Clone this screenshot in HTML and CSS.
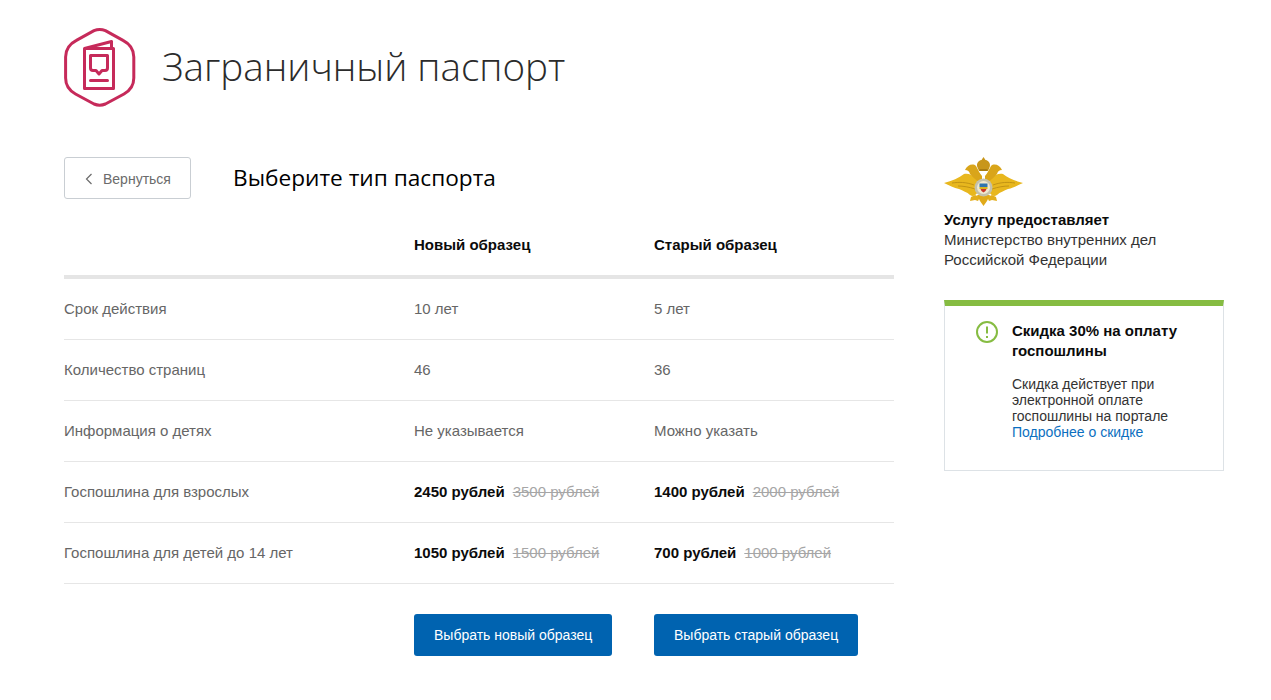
FILE: index.html
```html
<!DOCTYPE html>
<html lang="ru">
<head>
<meta charset="utf-8">
<title>Заграничный паспорт</title>
<link rel="stylesheet" href="styles.css">
</head>
<body>
<div class="page">
  <header class="page-head">
    <svg class="service-icon" width="74" height="82" viewBox="0 0 74 82" fill="none" stroke="#c62a5a" stroke-width="3" stroke-linejoin="round" stroke-linecap="round">
      <path d="M30 3.6 Q35.7 1.2 41.4 3.6 L59 13.4 Q69.8 19 69.8 30 L69.8 51 Q69.8 61.5 60 67 L41.4 77 Q35.7 79.4 30 77 L11.5 67 Q1.6 61.5 1.6 51 L1.6 30 Q1.6 19 12.4 13.4 Z"/>
      <path d="M20.5 21.5 H49.5 V61.5 H20.5 Z M20.5 21.5 L47.5 14.5 V21.5"/>
      <path d="M26.5 28.5 H43.5 V41 Q43.5 43.5 41 43.5 H38 L35 47 L32 43.5 H29 Q26.5 43.5 26.5 41 Z"/>
      <path d="M26.5 53.5 H43.5"/>
    </svg>
    <h1 class="page-title">Заграничный паспорт</h1>
  </header>
  <div class="columns">
    <main class="main">
      <div class="step-head">
        <a class="back" href="#">
          <svg class="back-arrow" width="8" height="12" viewBox="0 0 8 12" fill="none" stroke="#6b6b6b" stroke-width="1.2"><path d="M6.5 1 L1.5 6 L6.5 11"/></svg>
          <span>Вернуться</span>
        </a>
        <h2 class="step-title">Выберите тип паспорта</h2>
      </div>
      <div class="table">
        <div class="row row-head">
          <div class="cell"></div>
          <div class="cell">Новый образец</div>
          <div class="cell">Старый образец</div>
        </div>
        <div class="row">
          <div class="cell">Срок действия</div>
          <div class="cell">10 лет</div>
          <div class="cell">5 лет</div>
        </div>
        <div class="row">
          <div class="cell">Количество страниц</div>
          <div class="cell">46</div>
          <div class="cell">36</div>
        </div>
        <div class="row">
          <div class="cell">Информация о детях</div>
          <div class="cell">Не указывается</div>
          <div class="cell">Можно указать</div>
        </div>
        <div class="row">
          <div class="cell">Госпошлина для взрослых</div>
          <div class="cell"><b class="price">2450 рублей</b><s class="old-price">3500 рублей</s></div>
          <div class="cell"><b class="price">1400 рублей</b><s class="old-price">2000 рублей</s></div>
        </div>
        <div class="row">
          <div class="cell">Госпошлина для детей до 14 лет</div>
          <div class="cell"><b class="price">1050 рублей</b><s class="old-price">1500 рублей</s></div>
          <div class="cell"><b class="price">700 рублей</b><s class="old-price">1000 рублей</s></div>
        </div>
        <div class="row row-actions">
          <div class="cell"></div>
          <div class="cell"><a class="btn" href="#">Выбрать новый образец</a></div>
          <div class="cell"><a class="btn" href="#">Выбрать старый образец</a></div>
        </div>
      </div>
    </main>
    <aside class="side">
      <svg class="emblem" width="80" height="50" viewBox="0 0 80 50">
        <g>
          <path fill="#e8b71e" d="M0 26 C8 24 15 21 20 17 C24 16 29 18 33 22 L34 35 C31 39 29 40 26 38 C23 35 19 34 15 32 C10 31 5 28 0 26 Z"/>
          <path fill="none" stroke="#b88a12" stroke-width=".8" d="M8 26 C15 25 22 25 30 28 M14 29 C19 29 25 30 31 32"/>
          <path fill="#d9a51a" d="M35 26 C32 22 28 20 26 17 C25 14 24 13 21 13 C23 8 29 6 32 9 C34 12 35 16 38 19 L38 26 Z"/>
          <path fill="#e3ae1c" d="M31 38 L27 40 L26 44 L31 43 L34 44 L36 40 Z"/>
        </g>
        <g transform="matrix(-1 0 0 1 79 0)">
          <path fill="#e8b71e" d="M0 26 C8 24 15 21 20 17 C24 16 29 18 33 22 L34 35 C31 39 29 40 26 38 C23 35 19 34 15 32 C10 31 5 28 0 26 Z"/>
          <path fill="none" stroke="#b88a12" stroke-width=".8" d="M8 26 C15 25 22 25 30 28 M14 29 C19 29 25 30 31 32"/>
          <path fill="#d9a51a" d="M35 26 C32 22 28 20 26 17 C25 14 24 13 21 13 C23 8 29 6 32 9 C34 12 35 16 38 19 L38 26 Z"/>
          <path fill="#e3ae1c" d="M31 38 L27 40 L26 44 L31 43 L34 44 L36 40 Z"/>
        </g>
        <path fill="#e0aa1a" d="M33 38 H46 L43 44 L39.5 49 L36 44 Z"/>
        <path fill="#c8961a" d="M39.5 0 L41.5 3 C45 3.5 47 7 45.5 10.5 L44 14 H35 L33.5 10.5 C32 7 34 3.5 37.5 3 Z"/>
        <path fill="#a87c12" d="M35.5 12 H43.5 V14 H35.5 Z"/>
        <circle cx="39.5" cy="30.5" r="9" fill="#c4c1ab"/>
        <circle cx="39.5" cy="30.5" r="6.5" fill="#efe9d0"/>
        <path fill="#2f74ae" d="M35.5 26.5 H43.5 V30 H35.5 Z"/>
        <path fill="#d9b41e" d="M35.5 30 H43.5 V32 H35.5 Z"/>
        <path fill="#c8352b" d="M36.5 32 H42.5 L41.5 34 L39.5 35.5 L37.5 34 Z"/>
      </svg>
      <div class="provider">
        <b class="provider-label">Услугу предоставляет</b>
        <span>Министерство внутренних дел Российской Федерации</span>
      </div>
      <section class="notice">
        <svg class="notice-icon" width="24" height="24" viewBox="0 0 24 24" fill="none" stroke="#86bc42" stroke-width="2">
          <circle cx="12" cy="12" r="10"/>
          <path d="M12 6.5 V13.5 M12 16 V18"/>
        </svg>
        <div class="notice-body">
          <h3 class="notice-title">Скидка 30% на оплату госпошлины</h3>
          <p class="notice-text">Скидка действует при электронной оплате госпошлины на портале <a href="#">Подробнее о скидке</a></p>
        </div>
      </section>
    </aside>
  </div>
</div>
</body>
</html>
```
FILE: styles.css
```css
* { box-sizing: border-box; }
html, body { margin: 0; padding: 0; background: #fff; }
body { font-family: "Liberation Sans", Arial, sans-serif; font-size: 15px; color: #666; overflow: hidden; }
a { text-decoration: none; }
.page { padding: 27px 47px 0 64px; }
.page-head { display: flex; align-items: center; gap: 24px; height: 82px; }
.service-icon { display: block; flex: none; }
.page-title { margin: -4px 0 0; font-family: "Open Sans", sans-serif; font-weight: 300; font-size: 38.6px; line-height: 48px; color: #2b2b2b; }
.columns { display: flex; gap: 50px; margin-top: 48px; }
.main { width: 830px; flex: none; }
.step-head { display: flex; align-items: center; gap: 42px; height: 42px; }
.back { display: flex; align-items: center; gap: 10px; width: 127px; height: 42px; padding: 2px 0 0 20px; border: 1px solid #c9ced3; border-radius: 3px; color: #6b6b6b; font-size: 14px; }
.back-arrow { display: block; }
.step-title { margin: 0; font-family: "Open Sans", sans-serif; font-weight: 400; font-size: 22.65px; line-height: 42px; color: #000; }
.table { display: flex; flex-direction: column; }
.row { display: grid; grid-template-columns: 350px 240px 240px; align-items: center; height: 61px; padding-bottom: 2px; border-bottom: 1px solid #e6e6e6; color: #666; }
.row-head { height: 80px; padding: 14px 0 0; border-bottom: 4px solid #e5e5e5; font-weight: 700; color: #0b0b0b; }
.row-actions { height: auto; padding: 30px 0 0; border-bottom: 0; }
.price { color: #0b0b0b; margin-right: 8px; }
.old-price { color: #a6a6a6; }
.btn { display: inline-flex; align-items: center; height: 42px; padding: 0 20px; border-radius: 3px; background: #0063b0; color: #fff; font-size: 14px; }
.side { width: 280px; flex: none; color: #333; }
.emblem { display: block; margin-bottom: 3px; }
.provider { line-height: 20px; width: 240px; }
.provider-label { display: block; color: #0b0b0b; }
.notice { display: flex; gap: 13px; margin-top: 30px; padding: 15px 30px 0; height: 171px; border: 1px solid #dde2e6; border-top: 6px solid #86bc42; }
.notice-icon { display: block; flex: none; margin-top: -1px; }
.notice-title { margin: 0 0 15px; font-size: 15px; line-height: 20px; color: #0b0b0b; font-weight: 700; }
.notice-text { margin: 0; font-size: 14px; line-height: 16px; color: #333; }
.notice-text a { color: #0b6fc0; }
```
